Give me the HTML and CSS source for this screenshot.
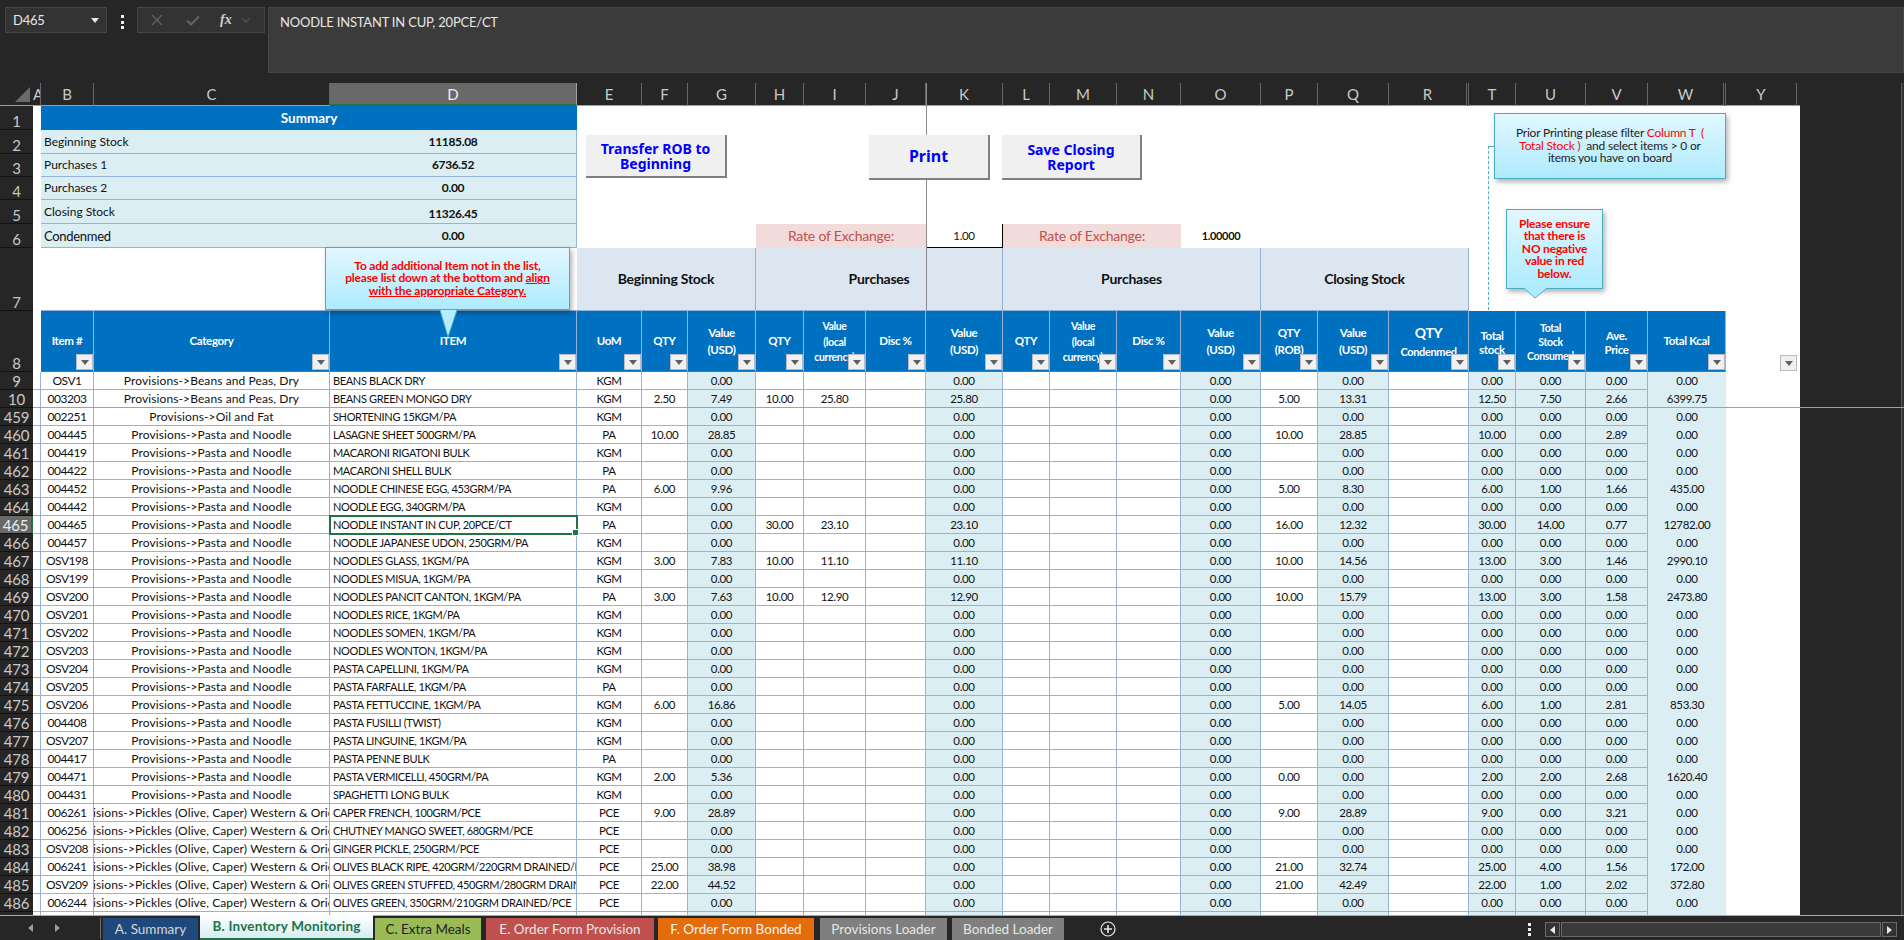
FILE: index.html
```html
<!DOCTYPE html>
<html lang="en">
<head>
<meta charset="utf-8">
<title>Inventory Monitoring</title>
<link rel="stylesheet" href="styles.css">
</head>
<body>
<header class="fbar">
  <div class="namebox"><span>D465</span><svg width="8" height="5" viewBox="0 0 8 5"><path d="M0 0h8L4 5z" fill="#e8e8e8"/></svg></div>
  <div class="kebab"><i></i><i></i><i></i></div>
  <div class="fxbox">
    <svg class="ic-x" width="12" height="12" viewBox="0 0 12 12"><path d="M1 1l10 10M11 1L1 11" stroke="#626262" stroke-width="1.4" fill="none"/></svg>
    <svg class="ic-c" width="14" height="11" viewBox="0 0 14 11"><path d="M1 5.5l4 4 8-8" stroke="#626262" stroke-width="2.2" fill="none"/></svg>
    <span class="fx">fx</span>
    <svg class="ic-d" width="8" height="5" viewBox="0 0 8 5"><path d="M.5.5L4 4 7.5.5" stroke="#555" stroke-width="1.2" fill="none"/></svg>
  </div>
  <div class="formula">NOODLE INSTANT IN CUP, 20PCE/CT</div>
</header>

<main class="sheet">
<table class="grid">
<colgroup>
<col class="w33"><col class="w8"><col class="w53"><col class="w236"><col class="w247"><col class="w65"><col class="w46"><col class="w68"><col class="w48"><col class="w62"><col class="w60"><col class="w77"><col class="w47"><col class="w67"><col class="w64"><col class="w80"><col class="w57"><col class="w71"><col class="w80"><col class="w47"><col class="w70"><col class="w62"><col class="w78"><col class="w71"><col class="w3">
</colgroup>
<tr class="cols"><th class="corner"><svg width="33" height="22" viewBox="0 0 33 22"><path d="M15 19L30 4v15z" fill="#6b6b6b"/></svg></th><th>A</th><th>B</th><th>C</th><th class="on">D</th><th>E</th><th>F</th><th>G</th><th>H</th><th>I</th><th>J</th><th>K</th><th>L</th><th>M</th><th>N</th><th>O</th><th>P</th><th>Q</th><th class="dbl">R</th><th>T</th><th>U</th><th>V</th><th class="dbl">W</th><th>Y</th><th class="end"></th></tr>
<tr class="r24"><th class="rh">1</th><td></td><td colspan="3" class="sumhead">Summary</td></tr>
<tr class="r24"><th class="rh">2</th><td></td><td colspan="2" class="sl">Beginning Stock</td><td class="sv">11185.08</td></tr>
<tr class="r23"><th class="rh">3</th><td></td><td colspan="2" class="sl">Purchases 1</td><td class="sv">6736.52</td></tr>
<tr class="r23"><th class="rh">4</th><td></td><td colspan="2" class="sl">Purchases 2</td><td class="sv">0.00</td></tr>
<tr class="r24"><th class="rh">5</th><td></td><td colspan="2" class="sl">Closing Stock</td><td class="sv low">11326.45</td></tr>
<tr class="r24"><th class="rh">6</th><td></td><td colspan="2" class="sl big">Condenmed</td><td class="sv">0.00</td><td colspan="3"></td><td colspan="3" class="rate">Rate of Exchange:</td><td class="rox">1.00</td><td colspan="3" class="rate">Rate of Exchange:</td><td class="rov">1.00000</td></tr>
<tr class="r63"><th class="rh">7</th><td></td><td colspan="3" class="blank"></td><td colspan="3" class="band">Beginning Stock</td><td colspan="4" class="band">Purchases</td><td colspan="4" class="band">Purchases</td><td colspan="3" class="band">Closing Stock</td></tr>
<tr class="r61"><th class="rh">8</th><td></td>
<th class="hd">Item #<i class="f"></i></th>
<th class="hd">Category<i class="f"></i></th>
<th class="hd">ITEM<i class="f"></i></th>
<th class="hd">UoM<i class="f"></i></th>
<th class="hd">QTY<i class="f"></i></th>
<th class="hd tall">Value<br>(USD)<i class="f"></i></th>
<th class="hd">QTY<i class="f"></i></th>
<th class="hd tri"><span class="sm3">Value<br>(local<br>currency)</span><i class="f"></i></th>
<th class="hd">Disc %<i class="f"></i></th>
<th class="hd tall">Value<br>(USD)<i class="f"></i></th>
<th class="hd">QTY<i class="f"></i></th>
<th class="hd tri"><span class="sm3">Value<br>(local<br>currency)</span><i class="f"></i></th>
<th class="hd">Disc %<i class="f"></i></th>
<th class="hd tall">Value<br>(USD)<i class="f"></i></th>
<th class="hd tall">QTY<br>(ROB)<i class="f"></i></th>
<th class="hd tall">Value<br>(USD)<i class="f"></i></th>
<th class="hd tall"><span class="qc">QTY</span><br><span class="sm">Condenmed</span><i class="f"></i></th>
<th class="hd tot">Total<br>stock<i class="f"></i></th>
<th class="hd tri"><span class="sm3 nar">Total<br>Stock<br>Consumed</span><i class="f"></i></th>
<th class="hd tot">Ave.<br>Price<i class="f"></i></th>
<th class="hd">Total Kcal<i class="f"></i></th>
<td class="yf"><i class="f"></i></td>
</tr>
<tr class="d"><th class="rh">9<td><td>OSV1<td>Provisions-&gt;Beans and Peas, Dry<td>BEANS BLACK DRY<td>KGM<td><td>0.00<td><td><td><td>0.00<td><td><td><td>0.00<td><td>0.00<td><td>0.00<td>0.00<td>0.00<td>0.00</tr>
<tr class="d"><th class="rh">10<td><td>003203<td>Provisions-&gt;Beans and Peas, Dry<td>BEANS GREEN MONGO DRY<td>KGM<td>2.50<td>7.49<td>10.00<td>25.80<td><td>25.80<td><td><td><td>0.00<td>5.00<td>13.31<td><td>12.50<td>7.50<td>2.66<td>6399.75</tr>
<tr class="d"><th class="rh">459<td><td>002251<td>Provisions-&gt;Oil and Fat<td>SHORTENING 15KGM/PA<td>KGM<td><td>0.00<td><td><td><td>0.00<td><td><td><td>0.00<td><td>0.00<td><td>0.00<td>0.00<td>0.00<td>0.00</tr>
<tr class="d"><th class="rh">460<td><td>004445<td>Provisions-&gt;Pasta and Noodle<td>LASAGNE SHEET 500GRM/PA<td>PA<td>10.00<td>28.85<td><td><td><td>0.00<td><td><td><td>0.00<td>10.00<td>28.85<td><td>10.00<td>0.00<td>2.89<td>0.00</tr>
<tr class="d"><th class="rh">461<td><td>004419<td>Provisions-&gt;Pasta and Noodle<td>MACARONI RIGATONI BULK<td>KGM<td><td>0.00<td><td><td><td>0.00<td><td><td><td>0.00<td><td>0.00<td><td>0.00<td>0.00<td>0.00<td>0.00</tr>
<tr class="d"><th class="rh">462<td><td>004422<td>Provisions-&gt;Pasta and Noodle<td>MACARONI SHELL BULK<td>PA<td><td>0.00<td><td><td><td>0.00<td><td><td><td>0.00<td><td>0.00<td><td>0.00<td>0.00<td>0.00<td>0.00</tr>
<tr class="d"><th class="rh">463<td><td>004452<td>Provisions-&gt;Pasta and Noodle<td>NOODLE CHINESE EGG, 453GRM/PA<td>PA<td>6.00<td>9.96<td><td><td><td>0.00<td><td><td><td>0.00<td>5.00<td>8.30<td><td>6.00<td>1.00<td>1.66<td>435.00</tr>
<tr class="d"><th class="rh">464<td><td>004442<td>Provisions-&gt;Pasta and Noodle<td>NOODLE EGG, 340GRM/PA<td>KGM<td><td>0.00<td><td><td><td>0.00<td><td><td><td>0.00<td><td>0.00<td><td>0.00<td>0.00<td>0.00<td>0.00</tr>
<tr class="d"><th class="rh on">465<td><td>004465<td>Provisions-&gt;Pasta and Noodle<td class="sel">NOODLE INSTANT IN CUP, 20PCE/CT<td>PA<td><td>0.00<td>30.00<td>23.10<td><td>23.10<td><td><td><td>0.00<td>16.00<td>12.32<td><td>30.00<td>14.00<td>0.77<td>12782.00</tr>
<tr class="d"><th class="rh">466<td><td>004457<td>Provisions-&gt;Pasta and Noodle<td>NOODLE JAPANESE UDON, 250GRM/PA<td>KGM<td><td>0.00<td><td><td><td>0.00<td><td><td><td>0.00<td><td>0.00<td><td>0.00<td>0.00<td>0.00<td>0.00</tr>
<tr class="d"><th class="rh">467<td><td>OSV198<td>Provisions-&gt;Pasta and Noodle<td>NOODLES GLASS, 1KGM/PA<td>KGM<td>3.00<td>7.83<td>10.00<td>11.10<td><td>11.10<td><td><td><td>0.00<td>10.00<td>14.56<td><td>13.00<td>3.00<td>1.46<td>2990.10</tr>
<tr class="d"><th class="rh">468<td><td>OSV199<td>Provisions-&gt;Pasta and Noodle<td>NOODLES MISUA, 1KGM/PA<td>KGM<td><td>0.00<td><td><td><td>0.00<td><td><td><td>0.00<td><td>0.00<td><td>0.00<td>0.00<td>0.00<td>0.00</tr>
<tr class="d"><th class="rh">469<td><td>OSV200<td>Provisions-&gt;Pasta and Noodle<td>NOODLES PANCIT CANTON, 1KGM/PA<td>PA<td>3.00<td>7.63<td>10.00<td>12.90<td><td>12.90<td><td><td><td>0.00<td>10.00<td>15.79<td><td>13.00<td>3.00<td>1.58<td>2473.80</tr>
<tr class="d"><th class="rh">470<td><td>OSV201<td>Provisions-&gt;Pasta and Noodle<td>NOODLES RICE, 1KGM/PA<td>KGM<td><td>0.00<td><td><td><td>0.00<td><td><td><td>0.00<td><td>0.00<td><td>0.00<td>0.00<td>0.00<td>0.00</tr>
<tr class="d"><th class="rh">471<td><td>OSV202<td>Provisions-&gt;Pasta and Noodle<td>NOODLES SOMEN, 1KGM/PA<td>KGM<td><td>0.00<td><td><td><td>0.00<td><td><td><td>0.00<td><td>0.00<td><td>0.00<td>0.00<td>0.00<td>0.00</tr>
<tr class="d"><th class="rh">472<td><td>OSV203<td>Provisions-&gt;Pasta and Noodle<td>NOODLES WONTON, 1KGM/PA<td>KGM<td><td>0.00<td><td><td><td>0.00<td><td><td><td>0.00<td><td>0.00<td><td>0.00<td>0.00<td>0.00<td>0.00</tr>
<tr class="d"><th class="rh">473<td><td>OSV204<td>Provisions-&gt;Pasta and Noodle<td>PASTA CAPELLINI, 1KGM/PA<td>KGM<td><td>0.00<td><td><td><td>0.00<td><td><td><td>0.00<td><td>0.00<td><td>0.00<td>0.00<td>0.00<td>0.00</tr>
<tr class="d"><th class="rh">474<td><td>OSV205<td>Provisions-&gt;Pasta and Noodle<td>PASTA FARFALLE, 1KGM/PA<td>PA<td><td>0.00<td><td><td><td>0.00<td><td><td><td>0.00<td><td>0.00<td><td>0.00<td>0.00<td>0.00<td>0.00</tr>
<tr class="d"><th class="rh">475<td><td>OSV206<td>Provisions-&gt;Pasta and Noodle<td>PASTA FETTUCCINE, 1KGM/PA<td>KGM<td>6.00<td>16.86<td><td><td><td>0.00<td><td><td><td>0.00<td>5.00<td>14.05<td><td>6.00<td>1.00<td>2.81<td>853.30</tr>
<tr class="d"><th class="rh">476<td><td>004408<td>Provisions-&gt;Pasta and Noodle<td>PASTA FUSILLI (TWIST)<td>KGM<td><td>0.00<td><td><td><td>0.00<td><td><td><td>0.00<td><td>0.00<td><td>0.00<td>0.00<td>0.00<td>0.00</tr>
<tr class="d"><th class="rh">477<td><td>OSV207<td>Provisions-&gt;Pasta and Noodle<td>PASTA LINGUINE, 1KGM/PA<td>KGM<td><td>0.00<td><td><td><td>0.00<td><td><td><td>0.00<td><td>0.00<td><td>0.00<td>0.00<td>0.00<td>0.00</tr>
<tr class="d"><th class="rh">478<td><td>004417<td>Provisions-&gt;Pasta and Noodle<td>PASTA PENNE BULK<td>PA<td><td>0.00<td><td><td><td>0.00<td><td><td><td>0.00<td><td>0.00<td><td>0.00<td>0.00<td>0.00<td>0.00</tr>
<tr class="d"><th class="rh">479<td><td>004471<td>Provisions-&gt;Pasta and Noodle<td>PASTA VERMICELLI, 450GRM/PA<td>KGM<td>2.00<td>5.36<td><td><td><td>0.00<td><td><td><td>0.00<td>0.00<td>0.00<td><td>2.00<td>2.00<td>2.68<td>1620.40</tr>
<tr class="d"><th class="rh">480<td><td>004431<td>Provisions-&gt;Pasta and Noodle<td>SPAGHETTI LONG BULK<td>KGM<td><td>0.00<td><td><td><td>0.00<td><td><td><td>0.00<td><td>0.00<td><td>0.00<td>0.00<td>0.00<td>0.00</tr>
<tr class="d"><th class="rh">481<td><td>006261<td><div class="clip"><span>Provisions-&gt;Pickles (Olive, Caper) Western &amp; Oriental</span></div><td>CAPER FRENCH, 100GRM/PCE<td>PCE<td>9.00<td>28.89<td><td><td><td>0.00<td><td><td><td>0.00<td>9.00<td>28.89<td><td>9.00<td>0.00<td>3.21<td>0.00</tr>
<tr class="d"><th class="rh">482<td><td>006256<td><div class="clip"><span>Provisions-&gt;Pickles (Olive, Caper) Western &amp; Oriental</span></div><td>CHUTNEY MANGO SWEET, 680GRM/PCE<td>PCE<td><td>0.00<td><td><td><td>0.00<td><td><td><td>0.00<td><td>0.00<td><td>0.00<td>0.00<td>0.00<td>0.00</tr>
<tr class="d"><th class="rh">483<td><td>OSV208<td><div class="clip"><span>Provisions-&gt;Pickles (Olive, Caper) Western &amp; Oriental</span></div><td>GINGER PICKLE, 250GRM/PCE<td>PCE<td><td>0.00<td><td><td><td>0.00<td><td><td><td>0.00<td><td>0.00<td><td>0.00<td>0.00<td>0.00<td>0.00</tr>
<tr class="d"><th class="rh">484<td><td>006241<td><div class="clip"><span>Provisions-&gt;Pickles (Olive, Caper) Western &amp; Oriental</span></div><td>OLIVES BLACK RIPE, 420GRM/220GRM DRAINED/PCE<td>PCE<td>25.00<td>38.98<td><td><td><td>0.00<td><td><td><td>0.00<td>21.00<td>32.74<td><td>25.00<td>4.00<td>1.56<td>172.00</tr>
<tr class="d"><th class="rh">485<td><td>OSV209<td><div class="clip"><span>Provisions-&gt;Pickles (Olive, Caper) Western &amp; Oriental</span></div><td>OLIVES GREEN STUFFED, 450GRM/280GRM DRAINED/PCE<td>PCE<td>22.00<td>44.52<td><td><td><td>0.00<td><td><td><td>0.00<td>21.00<td>42.49<td><td>22.00<td>1.00<td>2.02<td>372.80</tr>
<tr class="d"><th class="rh">486<td><td>006244<td><div class="clip"><span>Provisions-&gt;Pickles (Olive, Caper) Western &amp; Oriental</span></div><td>OLIVES GREEN, 350GRM/210GRM DRAINED/PCE<td>PCE<td><td>0.00<td><td><td><td>0.00<td><td><td><td>0.00<td><td>0.00<td><td>0.00<td>0.00<td>0.00<td>0.00</tr>
<tr class="d"><th class="rh">487<td><td><td><td><td><td><td><td><td><td><td><td><td><td><td><td><td><td><td><td><td><td></tr>
</table>

<div class="hline"></div>
<div class="vline"></div>
<div class="vscroll"></div>

<button class="btn b-transfer">Transfer ROB to<br>Beginning</button>
<button class="btn b-print">Print</button>
<button class="btn b-save">Save Closing<br>Report</button>

<div class="dash"></div>
<div class="note n-item">
  <p>To add additional Item not in the list,<br>please list down at the bottom and <u>align</u><br><u>with the appropriate Category.</u></p>
  <svg class="tip t-item" width="19" height="29" viewBox="0 0 19 29"><path d="M1 0L9 27 18 0z" fill="#b6edfd"/><path d="M1 0L9 27 18 0" fill="none" stroke="#4bacc6"/></svg>
</div>
<div class="note n-print"><p>Prior Printing please filter <em>Column T&nbsp; (<br>Total Stock )</em>&nbsp; and select items &gt; 0 or<br>items you have on board</p></div>
<div class="note n-neg">
  <p>Please ensure<br>that there is<br>NO negative<br>value in red<br>below.</p>
  <svg class="tip t-neg" width="26" height="12" viewBox="0 0 26 12"><path d="M1 0L12 10 24 0z" fill="#b0ecfd"/><path d="M1 0L12 10 24 0" fill="none" stroke="#4bacc6"/></svg>
</div>
</main>

<footer class="tabbar">
  <div class="nav">
    <svg width="5" height="8" viewBox="0 0 5 8"><path d="M5 0v8L0 4z" fill="#9a9a9a"/></svg>
    <svg width="5" height="8" viewBox="0 0 5 8"><path d="M0 0v8l5-4z" fill="#9a9a9a"/></svg>
  </div>
  <div class="tab t-a">A. Summary</div>
  <div class="tab t-b">B. Inventory Monitoring</div>
  <div class="tab t-c">C. Extra Meals</div>
  <div class="tab t-e">E. Order Form Provision</div>
  <div class="tab t-f">F. Order Form Bonded</div>
  <div class="tab t-p">Provisions Loader</div>
  <div class="tab t-q">Bonded Loader</div>
  <svg class="plus" width="16" height="16" viewBox="0 0 16 16"><circle cx="8" cy="8" r="7" fill="none" stroke="#e8e8e8" stroke-width="1.2"/><path d="M8 4v8M4 8h8" stroke="#e8e8e8" stroke-width="1.6"/></svg>
  <div class="kebab k2"><i></i><i></i><i></i></div>
  <div class="hscroll">
    <div class="sb"><svg width="5" height="8" viewBox="0 0 5 8"><path d="M5 0v8L0 4z" fill="#e8e8e8"/></svg></div>
    <div class="track"></div>
    <div class="sb"><svg width="5" height="8" viewBox="0 0 5 8"><path d="M0 0v8l5-4z" fill="#e8e8e8"/></svg></div>
  </div>
</footer>
</body>
</html>
```
FILE: styles.css
```css
* { box-sizing: border-box; }
html, body { margin: 0; height: 100%; overflow: hidden; }
body {
  width: 1904px; height: 940px;
  display: flex; flex-direction: column;
  background: #262626;
  font-family: Lato, "Open Sans", sans-serif;
  color: #111;
}

/* formula bar */
.fbar { height: 83px; flex: none; display: flex; align-items: flex-start; padding: 7px 0 0 5px; background: #262626; color: #e6e6e6; }
.namebox { width: 102px; height: 26px; background: #333; border: 1px solid #454545; display: flex; align-items: center; justify-content: space-between; padding: 0 7px; font-size: 13px; letter-spacing: -.2px; }
.kebab { width: 30px; display: flex; flex-direction: column; align-items: center; gap: 2.5px; padding-top: 8px; }
.kebab i { width: 3px; height: 3px; background: #f0f0f0; display: block; }
.fxbox { width: 128px; height: 26px; background: #333; border: 1px solid #454545; display: flex; align-items: center; position: relative; }
.ic-x { margin-left: 13px; }
.ic-c { margin-left: 23px; }
.fx { margin-left: 20px; font: italic 700 14px "Liberation Serif", serif; color: #cfcfcf; }
.ic-d { margin-left: 10px; }
.formula { width: 1636px; height: 66px; margin-left: 3px; background: #3b3b3b; border: 1px solid #454545; padding: 5px 11px; font-size: 13px; line-height: 18px; letter-spacing: -.2px; }

/* sheet */
.sheet { height: 832px; flex: none; position: relative; overflow: hidden; background: #262626; }
.grid { width: 1800px; table-layout: fixed; border-collapse: separate; border-spacing: 0; background: #fff; font-size: 11.5px; letter-spacing: -.35px; line-height: 16px; }
.grid td, .grid th { padding: 0; overflow: hidden; white-space: nowrap; }
.w3{width:3px}.w8{width:8px}.w33{width:33px}.w46{width:46px}.w47{width:47px}.w48{width:48px}.w53{width:53px}.w57{width:57px}.w60{width:60px}.w62{width:62px}.w64{width:64px}.w65{width:65px}.w67{width:67px}.w68{width:68px}.w70{width:70px}.w71{width:71px}.w77{width:77px}.w78{width:78px}.w80{width:80px}.w236{width:236px}.w247{width:247px}

.cols { height: 22px; }
.cols th { background: #262626; color: #c9c9c9; font-weight: 400; font-size: 15px; letter-spacing: 0; border-right: 1px solid #666; border-bottom: 1px solid #a0a0a0; }
.cols th.corner { border-right: 0; line-height: 0; text-align: left; }
.cols th.corner svg { display: block; }
.cols th.on { background: #696969; color: #eee; border-bottom: 2px solid #217346; border-right-color: #a0a0a0; }
.cols th.dbl { border-right: 3px double #666; }
.cols th.end { border-right: 0; }

.r24 { height: 24px; } .r23 { height: 23px; } .r63 { height: 63px; } .r61 { height: 61px; }

.rh { background: #262626; color: #c9c9c9; font-weight: 400; font-size: 15px; letter-spacing: -.2px; text-align: center; vertical-align: bottom; border-bottom: 1px solid #111; line-height: 16px; }
.rh.on { background: #696969; color: #eee; border-right: 2px solid #217346; }

.sumhead { background: #0070c0; color: #fff; font-weight: 700; text-align: center; font-size: 13.5px; letter-spacing: 0; }
.sl, .sv { background: #daeef3; border-bottom: 1px solid #95b3d7; }
.sl { padding-left: 3px !important; font-size: 12px; letter-spacing: 0; }
.sl.big { font-size: 13px; letter-spacing: -.3px; }
.sv { text-align: center; font-weight: 700; border-right: 1px solid #95b3d7; font-size: 12px; }
.sv.low { vertical-align: bottom; padding-bottom: 1px; }
.rate { background: #f2dcdb; color: #c0504d; text-align: center; font-size: 14px; letter-spacing: -.2px; }
.rox { text-align: center; border-right: 1px solid #000; border-bottom: 1px solid #000; }
.rov { text-align: center; font-weight: 700; font-size: 11px; }

.blank { border-bottom: 1px solid #95b3d7; }
.band { background: #dce6f1; border-right: 1px solid #95b3d7; border-bottom: 1px solid #95b3d7; text-align: center; font-weight: 700; font-size: 14px; letter-spacing: -.25px; }

.hd { position: relative; background: #0070c0; color: #fff; font-weight: 700; font-size: 11.5px; text-align: center; vertical-align: middle; border-right: 1px solid #95b3d7; border-bottom: 1px solid #2a80c8; line-height: 17px; padding-bottom: 2px !important; }
.hd.tall { padding-bottom: 0 !important; }
.hd.tot { line-height: 14px; padding: 3px 0 0 !important; }
.hd.tri { padding: 3px 0 0 !important; }
.sm3 { font-size: 10.5px; line-height: 15.5px; display: inline-block; }
.sm3.nar { line-height: 14px; }
.qc { font-size: 14px; line-height: 20px; }
.sm { font-size: 11px; }
.f { position: absolute; right: 0; bottom: 1px; width: 17px; height: 16px; background: #f0f0f0; border: 1px solid #b6bcc8; display: block; }
.f::after { content: ""; position: absolute; left: 4px; top: 5px; border: 4px solid transparent; border-top: 5px solid #606060; border-bottom: 0; }
.yf { position: relative; }

.d { height: 18px; }
.d td { border-right: 1px solid #95b3d7; border-bottom: 1px solid #95b3d7; text-align: center; line-height: 16px; }
.d td:nth-child(3) { letter-spacing: -.5px; font-size: 12px; }
.d td:nth-child(4) { font-size: 12px; letter-spacing: .1px; }
.d td:nth-child(5) { text-align: left; padding-left: 3px; font-size: 11px; }
.d td:nth-child(8), .d td:nth-child(12), .d td:nth-child(16), .d td:nth-child(18),
.d td:nth-child(20), .d td:nth-child(21), .d td:nth-child(22), .d td:nth-child(23) { background: #daeef3; }
.d td:nth-child(23) { border-bottom: 0; border-right: 0; }
.clip { display: flex; justify-content: center; overflow: hidden; }
.clip span { flex: none; }
.d td.sel { position: relative; overflow: visible; outline: 2px solid #217346; outline-offset: -1px; z-index: 1; }
.d td.sel::after { content: ""; position: absolute; right: -3px; bottom: -3px; width: 5px; height: 5px; background: #217346; border: 1px solid #fff; }

/* freeze lines */
.hline { position: absolute; left: 33px; right: 0; top: 324px; height: 1px; background: #a2a2a2; z-index: 2; }
.vline { position: absolute; left: 926px; top: 0; width: 1px; height: 227px; background: #8c8c8c; z-index: 2; }
.vscroll { position: absolute; right: 0; top: 0; bottom: 0; width: 3px; background: #333; border-left: 1px solid #5a5a5a; }

/* sheet buttons */
.btn { position: absolute; z-index: 3; padding: 0; background: #f0f0f0; border: 0; border-right: 2px solid #808080; border-bottom: 2px solid #808080; color: #0000ff; font: 700 14px/15px "Noto Sans", sans-serif; text-align: center; }
.b-transfer { left: 586px; top: 52px; width: 141px; height: 43px; }
.b-print { left: 869px; top: 52px; width: 121px; height: 45px; font-size: 16px; }
.b-save { left: 1002px; top: 52px; width: 140px; height: 45px; }

/* callouts */
.note { position: absolute; z-index: 4; background: linear-gradient(#e2f7fe, #aeebfd); border: 1px solid #4bacc6; box-shadow: 2px 3px 5px rgba(0,0,0,.3); display: flex; align-items: center; justify-content: center; text-align: center; font-weight: 700; font-size: 12px; letter-spacing: -.2px; line-height: 12.4px; }
.note p { margin: 0; }
.n-item { left: 325px; top: 164px; width: 245px; height: 63px; color: #ff0000; }
.n-print { left: 1494px; top: 30px; width: 232px; height: 66px; color: #222; font-size: 12px; font-weight: 400; }
.n-print em { color: #ff0000; font-style: normal; }
.n-neg { left: 1506px; top: 126px; width: 97px; height: 80px; color: #ff0000; }
.tip { position: absolute; }
.t-item { left: 113px; top: 62px; }
.t-neg { left: 16px; top: 78px; }
.dash { position: absolute; z-index: 2; left: 1488px; top: 63px; width: 7px; height: 164px; border-left: 1px dashed #4bacc6; border-top: 1px solid #4bacc6; }

/* tab bar */
.tabbar { height: 25px; flex: none; display: flex; align-items: stretch; background: #262626; border-top: 1px solid #a8a8a8; font-size: 13.5px; position: relative; }
.nav { width: 103px; display: flex; align-items: center; gap: 22px; padding-left: 28px; border-right: 0; position: relative; }
.nav::after { content: ""; position: absolute; right: 2px; top: 2px; bottom: 1px; width: 1px; background: #6b6b6b; }
.tab { display: flex; align-items: center; justify-content: center; margin-top: 2px; color: #e6e6e6; }
.t-a { width: 95px; background: #1f497d; margin-right: 2px; color: #d6d6d6; }
.t-b { width: 173px; margin-top: -1px; padding-bottom: 1px; margin-right: 2px; background: linear-gradient(#fff, #d6ecf4); color: #217346; font-weight: 700; border-bottom: 2px solid #217346; letter-spacing: .2px; }
.t-c { width: 106px; background: #9bbb59; color: #222; margin-right: 5px; }
.t-e { width: 168px; background: #c0504d; margin-right: 4px; }
.t-f { width: 156px; background: #e46c0a; margin-right: 6px; color: #f6f6f6; }
.t-p { width: 127px; background: #7f7f7f; margin-right: 5px; }
.t-q { width: 112px; background: #7f7f7f; }
.plus { margin: 5px 0 0 36px; }
.k2 { width: 10px; margin-left: 408px; padding-top: 7px; gap: 2px; }
.hscroll { display: flex; align-items: center; margin-left: 11px; height: 15px; margin-top: 6px; gap: 1px; }
.sb { width: 15px; height: 15px; background: #333; border: 1px solid #6a6a6a; display: flex; align-items: center; justify-content: center; }
.track { width: 320px; height: 15px; background: #3a3a3a; border: 1px solid #6a6a6a; }
```
